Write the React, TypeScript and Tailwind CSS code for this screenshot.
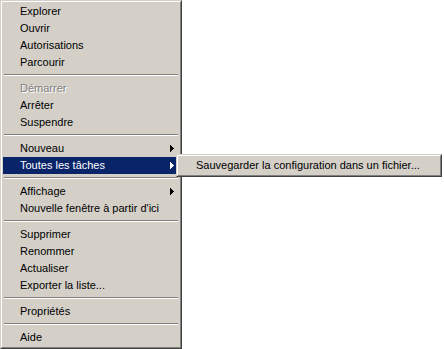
type Entry =
    | { kind: "item"; label: string; disabled?: boolean; submenu?: boolean; active?: boolean }
    | { kind: "sep" };

const MENU: Entry[] = [
    { kind: "item", label: "Explorer" },
    { kind: "item", label: "Ouvrir" },
    { kind: "item", label: "Autorisations" },
    { kind: "item", label: "Parcourir" },
    { kind: "sep" },
    { kind: "item", label: "Démarrer", disabled: true },
    { kind: "item", label: "Arrêter" },
    { kind: "item", label: "Suspendre" },
    { kind: "sep" },
    { kind: "item", label: "Nouveau", submenu: true },
    { kind: "item", label: "Toutes les tâches", submenu: true, active: true },
    { kind: "sep" },
    { kind: "item", label: "Affichage", submenu: true },
    { kind: "item", label: "Nouvelle fenêtre à partir d'ici" },
    { kind: "sep" },
    { kind: "item", label: "Supprimer" },
    { kind: "item", label: "Renommer" },
    { kind: "item", label: "Actualiser" },
    { kind: "item", label: "Exporter la liste..." },
    { kind: "sep" },
    { kind: "item", label: "Propriétés" },
    { kind: "sep" },
    { kind: "item", label: "Aide" },
];

// classic win2k pixel arrow (4x7)
function Arrow({ white }: { white?: boolean }) {
    const fill = white ? "#ffffff" : "#000000";
    return (
        <svg width="4" height="7" viewBox="0 0 4 7" shapeRendering="crispEdges" className="block">
            <rect x="0" y="0" width="1" height="7" fill={fill} />
            <rect x="1" y="1" width="1" height="5" fill={fill} />
            <rect x="2" y="2" width="1" height="3" fill={fill} />
            <rect x="3" y="3" width="1" height="1" fill={fill} />
        </svg>
    );
}

function Separator() {
    return (
        <div className="h-[9px] px-[1px] pt-[3px]">
            <div className="h-px bg-[#808080]" />
            <div className="h-px bg-white" />
        </div>
    );
}

function MenuItem({ label, disabled, submenu, active }: { label: string; disabled?: boolean; submenu?: boolean; active?: boolean }) {
    return (
        <div
            className={`h-[17px] flex items-center pl-[17px] pr-[5px] whitespace-nowrap ${active ? "bg-[#0a246a] text-white" : disabled ? "text-[#808080] [text-shadow:1px_1px_0_#ffffff]" : "text-black"
                }`}
        >
            <span className="flex-1 leading-none">{label}</span>
            {submenu && <Arrow white={active} />}
        </div>
    );
}

// 3d raised frame used by both menus
function Frame({ className, children }: { className: string; children: React.ReactNode }) {
    return (
        <div className={`bg-[#d4d0c8] border border-t-[#d4d0c8] border-l-[#d4d0c8] border-r-[#404040] border-b-[#404040] ${className}`}>
            <div className="h-full border border-t-white border-l-white border-r-[#808080] border-b-[#808080] p-[1px]">
                {children}
            </div>
        </div>
    );
}

export default function App() {
    return (
        <div className="relative w-[444px] h-[349px] bg-white overflow-hidden text-[11px] font-['Liberation_Sans',Arial,sans-serif]">
            <Frame className="w-[182px] h-[349px]">
                {MENU.map((e, i) =>
                    e.kind === "sep" ? (
                        <Separator key={i} />
                    ) : (
                        <MenuItem key={i} label={e.label} disabled={e.disabled} submenu={e.submenu} active={e.active} />
                    )
                )}
            </Frame>

            {/* Toutes les tâches submenu */}
            <Frame className="absolute left-[176px] top-[154px] w-[266px] h-[23px]">
                <MenuItem label="Sauvegarder la configuration dans un fichier..." />
            </Frame>
        </div>
    );
}
